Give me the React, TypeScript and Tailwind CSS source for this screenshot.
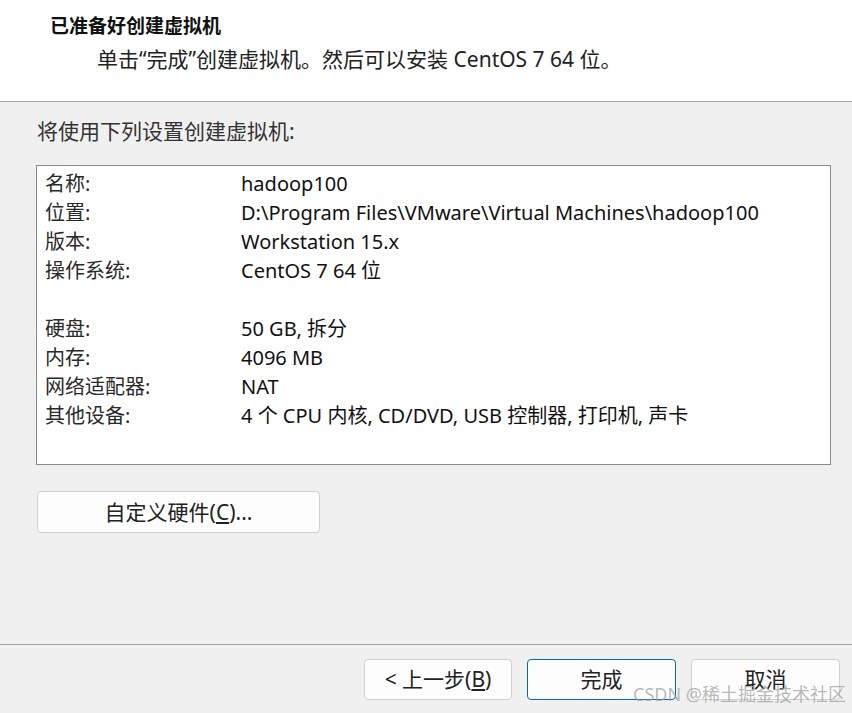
import React from "react";

const rows1: [string, string][] = [
  ["名称:", "hadoop100"],
  ["位置:", "D:\\Program Files\\VMware\\Virtual Machines\\hadoop100"],
  ["版本:", "Workstation 15.x"],
  ["操作系统:", "CentOS 7 64 位"],
];
const rows2: [string, string][] = [
  ["硬盘:", "50 GB, 拆分"],
  ["内存:", "4096 MB"],
  ["网络适配器:", "NAT"],
  ["其他设备:", "4 个 CPU 内核, CD/DVD, USB 控制器, 打印机, 声卡"],
];

function Row({ k, v }: { k: string; v: string }) {
  return (
    <div className="flex h-[29px] items-center">
      <div className="w-[196px] text-[#2a2a2a]">{k}</div>
      <div className="text-[#111]">{v}</div>
    </div>
  );
}

export default function App() {
  return (
    <div
      className="relative w-[852px] h-[713px] bg-[#f0f0f0] overflow-hidden text-[20px] leading-none"
      style={{ fontFamily: '"Segoe UI", "Noto Sans", "Noto Sans CJK SC", sans-serif' }}
    >
      <div className="h-[102px] bg-white border-b border-[#a6a6a6]">
        <div className="pl-[50px] pt-[17px] font-bold text-[19px] text-[#111]">已准备好创建虚拟机</div>
        <div className="pl-[97px] pt-[13px] text-[21px] text-[#222]">
          单击“完成”创建虚拟机。然后可以安装 CentOS 7 64 位。
        </div>
      </div>
      <div className="pl-[37px] pt-[19px] text-[21px] text-[#333]">将使用下列设置创建虚拟机:</div>
      <div className="ml-[36px] mt-[23px] w-[795px] h-[300px] bg-white border border-[#8a8a8a] pl-[8px] pt-[3px]">
        {rows1.map(([k, v]) => (
          <Row key={k} k={k} v={v} />
        ))}
        <div className="h-[29px]" />
        {rows2.map(([k, v]) => (
          <Row key={k} k={k} v={v} />
        ))}
      </div>
      <div className="ml-[37px] mt-[26px] w-[283px] h-[42px] bg-[#fdfdfd] border border-[#cfcfcf] rounded-[4px] flex items-center justify-center text-[21px] text-[#222]">
        自定义硬件(<span className="underline underline-offset-2">C</span>)...
      </div>
      <div className="mt-[111px] border-t border-[#a6a6a6]" />
      <div className="flex justify-end gap-[15px] pr-[12px] pt-[14px]">
        <div className="w-[148px] h-[41px] bg-[#fdfdfd] border border-[#d0d0d0] rounded-[4px] flex items-center justify-center text-[21px] text-[#222]">
          &lt; 上一步(<span className="underline underline-offset-2">B</span>)
        </div>
        <div className="w-[149px] h-[41px] bg-[#fdfdfd] border border-[#0067c0] rounded-[4px] flex items-center justify-center text-[21px] text-[#222]">
          完成
        </div>
        <div className="w-[149px] h-[41px] bg-[#fdfdfd] border border-[#d0d0d0] rounded-[4px] flex items-center justify-center text-[21px] text-[#222]">
          取消
        </div>
      </div>
      <div className="absolute right-[6px] bottom-[10px] text-[18px] text-[#9a9a9a]/70 whitespace-nowrap">
        CSDN @稀土掘金技术社区
      </div>
    </div>
  );
}
